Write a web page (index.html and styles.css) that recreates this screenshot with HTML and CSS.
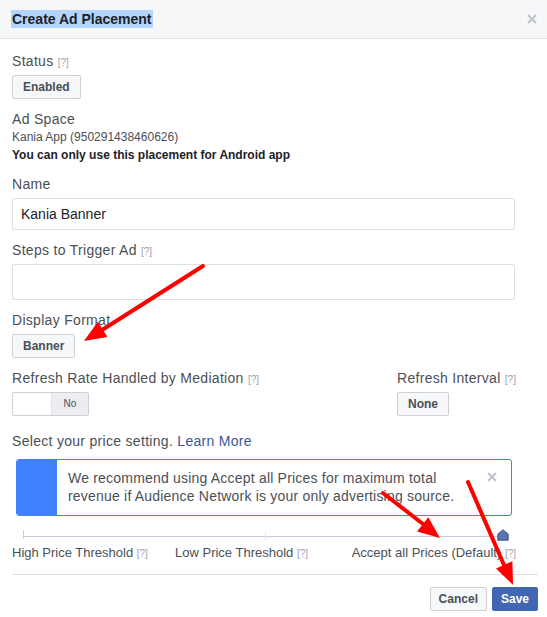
FILE: index.html
```html
<!DOCTYPE html>
<html lang="en">

<head>
    <meta charset="UTF-8">
    <meta name="viewport" content="width=device-width, initial-scale=1.0">
    <title>Create Ad Placement</title>
    <link rel="stylesheet" href="styles.css">
</head>

<body>
    <div class="dialog">
        <div class="dialog-header">
            <span class="dialog-title">Create Ad Placement</span>
            <svg class="dialog-close" width="10" height="10" viewBox="0 0 10 10">
                <path d="M1 1L9 9M9 1L1 9" stroke="#bec2c9" stroke-width="2" />
            </svg>
        </div>

        <div class="dialog-body">
            <div class="field">
                <div class="field-label">Status <span class="help">[?]</span></div>
                <button class="btn">Enabled</button>
            </div>

            <div class="field">
                <div class="field-label tight">Ad Space</div>
                <div class="small-text">Kania App (950291438460626)</div>
                <div class="small-text bold">You can only use this placement for Android app</div>
            </div>

            <div class="field">
                <div class="field-label">Name</div>
                <input class="text-input" type="text" value="Kania Banner">
            </div>

            <div class="field">
                <div class="field-label">Steps to Trigger Ad <span class="help">[?]</span></div>
                <textarea class="text-area"></textarea>
            </div>

            <div class="field">
                <div class="field-label">Display Format</div>
                <button class="btn">Banner</button>
            </div>

            <div class="field-row">
                <div class="field">
                    <div class="field-label">Refresh Rate Handled by Mediation <span class="help">[?]</span></div>
                    <div class="toggle">
                        <span class="toggle-off"></span>
                        <span class="toggle-label">No</span>
                    </div>
                </div>
                <div class="field">
                    <div class="field-label">Refresh Interval <span class="help">[?]</span></div>
                    <button class="btn">None</button>
                </div>
            </div>

            <div class="price-text">Select your price setting. <a href="#" class="link">Learn More</a></div>

            <div class="notice">
                <div class="notice-bar"></div>
                <div class="notice-text">We recommend using Accept all Prices for maximum total revenue if Audience Network is your only advertising source.</div>
                <svg class="notice-close" width="10" height="10" viewBox="0 0 10 10">
                    <path d="M1 1L9 9M9 1L1 9" stroke="#bec2c9" stroke-width="2" />
                </svg>
            </div>

            <div class="slider">
                <div class="slider-track">
                    <span class="tick tick-start"></span>
                    <span class="tick tick-mid"></span>
                    <svg class="slider-handle" width="12" height="12" viewBox="0 0 12 12">
                        <path d="M6 0.8L11.2 5V11.2H0.8V5Z" fill="#5874a8" stroke="#3b5998" stroke-width="1" />
                    </svg>
                </div>
                <div class="slider-labels">
                    <span>High Price Threshold <span class="help">[?]</span></span>
                    <span>Low Price Threshold <span class="help">[?]</span></span>
                    <span>Accept all Prices (Default) <span class="help">[?]</span></span>
                </div>
            </div>
        </div>

        <div class="dialog-footer">
            <button class="btn">Cancel</button>
            <button class="btn btn-primary">Save</button>
        </div>

        <svg class="arrows" width="547" height="617" viewBox="0 0 547 617">
            <g stroke="#fe0000" stroke-width="4" stroke-linecap="round">
                <line x1="203" y1="266" x2="102" y2="330" />
                <line x1="383" y1="493" x2="423" y2="524" />
                <line x1="468" y1="482" x2="504" y2="565" />
            </g>
            <g fill="#fe0000">
                <polygon points="84,341 107.4,336.9 97.8,321.7" />
                <polygon points="440,538 417.1,531.5 428.3,517.3" />
                <polygon points="513,585 496,568.4 512.4,561.2" />
            </g>
        </svg>
    </div>
</body>

</html>
```

FILE: styles.css
```css
* {
    margin: 0;
    box-sizing: border-box;
}

body {
    margin: 0;
    background: #fff;
    font-family: "Liberation Sans", Helvetica, Arial, sans-serif;
    color: #4b4f56;
}

.dialog {
    position: relative;
    width: 547px;
    height: 617px;
}

.dialog-header {
    height: 39px;
    padding: 0 10px 0 11px;
    display: flex;
    align-items: center;
    justify-content: space-between;
    background: #f6f7f9;
    border-bottom: 1px solid #e5e5e5;
}

.dialog-title {
    font-size: 14px;
    font-weight: bold;
    line-height: 18px;
    color: #1d2129;
    background: #b3d4fc;
    padding: 0 1px;
}

.dialog-body {
    padding: 13px 32px 0 12px;
}

.field {
    margin-bottom: 11px;
}

.field-label {
    font-size: 14px;
    line-height: 18px;
    letter-spacing: 0.3px;
    margin-bottom: 5px;
    white-space: nowrap;
}

.field-label.tight {
    margin-bottom: 0;
}

.help {
    font-size: 10px;
    line-height: 1;
    letter-spacing: 0;
    color: #9ea2a8;
}

.small-text {
    font-size: 12px;
    line-height: 18px;
    color: #4b4f56;
}

.small-text.bold {
    font-weight: bold;
    color: #1d2129;
}

.btn {
    display: block;
    height: 24px;
    padding: 0 8px;
    font-family: inherit;
    font-size: 12px;
    font-weight: bold;
    color: #4b4f56;
    background: #f6f7f9;
    border: 1px solid #ced0d4;
    border-radius: 2px;
}

.field .btn {
    padding: 0 10px;
}

.btn-primary {
    background: #4267b2;
    border-color: #4267b2;
    color: #fff;
}

.text-input {
    display: block;
    width: 100%;
    height: 32px;
    padding: 0 8px;
    font-family: inherit;
    font-size: 14px;
    color: #1d2129;
    border: 1px solid #dddfe2;
    border-radius: 2px;
}

.text-area {
    display: block;
    width: 100%;
    height: 36px;
    resize: none;
    border: 1px solid #dddfe2;
    border-radius: 2px;
}

.field-row {
    display: grid;
    grid-template-columns: 385px 1fr;
}

.toggle {
    display: flex;
    width: 77px;
    height: 24px;
    border: 1px solid #ced0d4;
    border-radius: 2px;
    overflow: hidden;
}

.toggle-off {
    width: 39px;
    background: #fff;
    border-right: 1px solid #dddfe2;
}

.toggle-label {
    flex: 1;
    background: #ebedf0;
    font-size: 10px;
    line-height: 22px;
    text-align: center;
    color: #4b4f56;
}

.price-text {
    font-size: 14px;
    line-height: 18px;
    letter-spacing: 0.3px;
    margin-top: 5px;
}

.link {
    color: #365899;
    text-decoration: none;
}

.notice {
    display: flex;
    margin: 9px 3px 0 4px;
    height: 57px;
    border: 1px solid #4080ff;
    border-radius: 3px;
    overflow: hidden;
}

.notice-bar {
    width: 40px;
    background: #4080ff;
}

.notice-text {
    flex: 1;
    padding: 9px 0 0 11px;
    font-size: 14px;
    line-height: 18px;
    letter-spacing: 0.2px;
    color: #4b4f56;
}

.notice-close {
    margin: 12px 14px 0 10px;
}

.slider {
    margin-top: 10px;
}

.slider-track {
    position: relative;
    height: 18px;
    margin: 0 -2px 0 11px;
}

.slider-track::before {
    content: "";
    position: absolute;
    left: 0;
    right: 12px;
    top: 10px;
    border-top: 1px solid #c4cedc;
}

.tick {
    position: absolute;
    top: 4px;
    width: 1px;
    height: 9px;
    background: #c4cedc;
}

.tick-start {
    left: 0;
}

.tick-mid {
    left: 242px;
    height: 8px;
    top: 6px;
    background: #dde2ea;
}

.slider-handle {
    position: absolute;
    right: 8px;
    top: 3px;
}

.slider-labels {
    display: grid;
    grid-template-columns: 163px 1fr auto;
    font-size: 13px;
    line-height: 18px;
    margin-right: -1px;
}

.dialog-footer {
    display: flex;
    justify-content: flex-end;
    gap: 5px;
    margin: 12px 9px 0 12px;
    padding-top: 12px;
    border-top: 1px solid #dddfe2;
}

.arrows {
    position: absolute;
    top: 0;
    left: 0;
    pointer-events: none;
}
```
